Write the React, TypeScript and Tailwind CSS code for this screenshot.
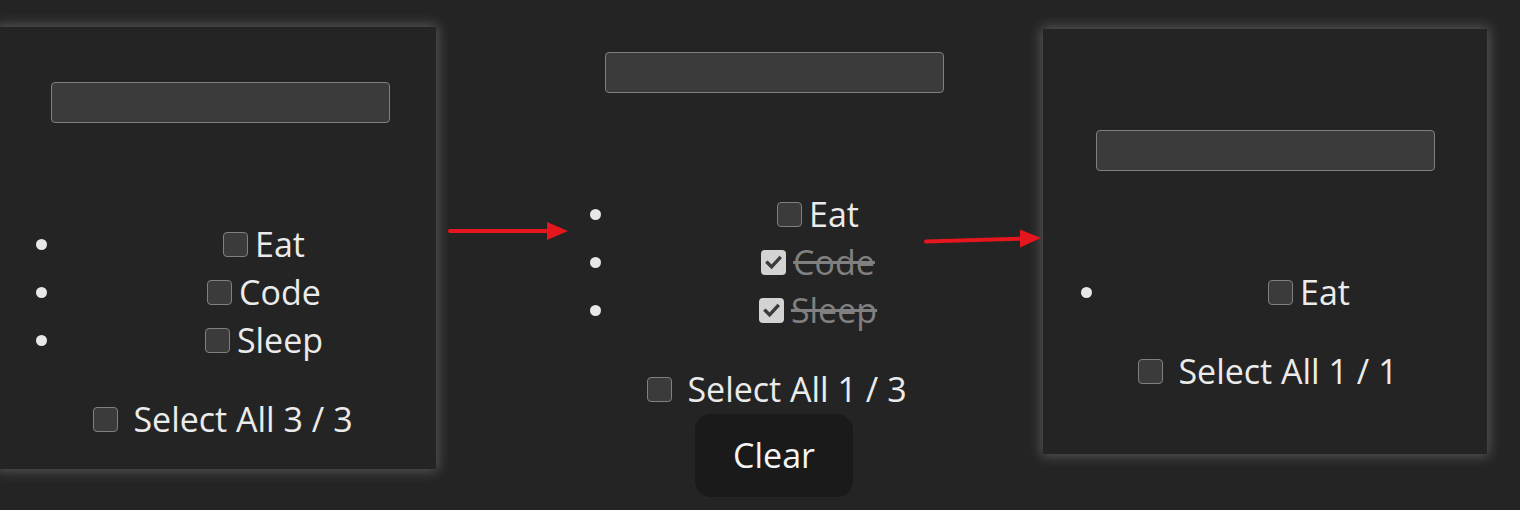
import React from 'react';

type Todo = { label: string; done: boolean };

function Box({ checked }: { checked: boolean }) {
  if (checked) {
    return (
      <span className="flex h-[25px] w-[25px] shrink-0 items-center justify-center rounded-[4px] bg-[#d3d3d3]">
        <svg width="25" height="25" viewBox="0 0 25 25">
          <path d="M6.5 12.8 L10.6 16.9 L18.6 8.2" fill="none" stroke="#3a3a3a" strokeWidth="3.4" strokeLinecap="square" />
        </svg>
      </span>);

  }
  return <span className="block h-[25px] w-[25px] shrink-0 rounded-[4px] border-[1.5px] border-[#808080] bg-[#3b3b3b]"></span>;
}

function Content({ todos, total }: {todos: Todo[];total: number;}) {
  return (
    <div className="flex w-[444px] shrink-0 flex-col">
      <div className="ml-[53px] h-[41px] w-[339px] rounded-[4px] border-[1.5px] border-[#808080] bg-[#3b3b3b]"></div>
      <ul className="mt-[97px]">
        {todos.map((t) =>
        <li key={t.label} className="flex h-[48px] items-center">
            <span className="ml-[38px] mr-[39px] block h-[11px] w-[11px] shrink-0 rounded-full bg-[#e8e8e8]"></span>
            <div className="flex flex-1 items-center justify-center">
              <Box checked={t.done} />
              <span
              className={`ml-[7px] leading-[48px] ${t.done ? 'text-[#808080] line-through decoration-[#808080]' : 'text-[#ebebeb]'}`}>
                {t.label}
              </span>
            </div>
          </li>
        )}
      </ul>
      <div className="mt-[32px] flex h-[46px] items-center justify-center pl-[6px]">
        <Box checked={false} />
        <span className="ml-[15px] leading-[46px] text-[#ebebeb]">
          Select All {todos.filter((t) => !t.done).length} / {total}
        </span>
      </div>
    </div>);

}

export default function App() {
  const all: Todo[] = [
  { label: 'Eat', done: false },
  { label: 'Code', done: false },
  { label: 'Sleep', done: false }];

  const some: Todo[] = [
  { label: 'Eat', done: false },
  { label: 'Code', done: true },
  { label: 'Sleep', done: true }];

  const one: Todo[] = [{ label: 'Eat', done: false }];

  return (
    <div
      className="relative h-[510px] w-[1520px] overflow-hidden bg-[#242424] text-[34px]"
      style={{ fontFamily: '"Open Sans", "Noto Sans", sans-serif' }}>
      
      <div className="flex items-start">
        {/* state 1 */}
        <div className="ml-[-2px] mt-[27px] h-[442px] w-[438px] shrink-0 overflow-hidden bg-[#242424] pt-[55px] shadow-[0_0_12px_2px_rgba(255,255,255,0.24)]">
          <Content todos={all} total={3} />
        </div>

        {/* state 2 */}
        <div className="ml-[116px] mt-[52px] flex w-[444px] shrink-0 flex-col items-center">
          <Content todos={some} total={3} />
          <button className="mt-[2px] h-[83px] w-[158px] rounded-[16px] bg-[#1a1a1a] text-[#f5f5f5]">
            Clear
          </button>
        </div>

        {/* state 3 */}
        <div className="ml-[47px] mt-[29px] h-[425px] w-[444px] shrink-0 bg-[#242424] pt-[101px] shadow-[0_0_12px_2px_rgba(255,255,255,0.24)]">
          <Content todos={one} total={1} />
        </div>
      </div>

      {/* arrows */}
      <svg className="pointer-events-none absolute left-0 top-0" width="1520" height="510">
        <line x1="450" y1="231" x2="552" y2="231" stroke="#e5161d" strokeWidth="4" strokeLinecap="round" />
        <polygon points="547,222 568,231 547,240" fill="#e5161d" />
        <line x1="926" y1="241.5" x2="1025" y2="238.5" stroke="#e5161d" strokeWidth="4" strokeLinecap="round" />
        <polygon points="1020,229.5 1041,238 1020,247.5" fill="#e5161d" />
      </svg>
    </div>);

}
